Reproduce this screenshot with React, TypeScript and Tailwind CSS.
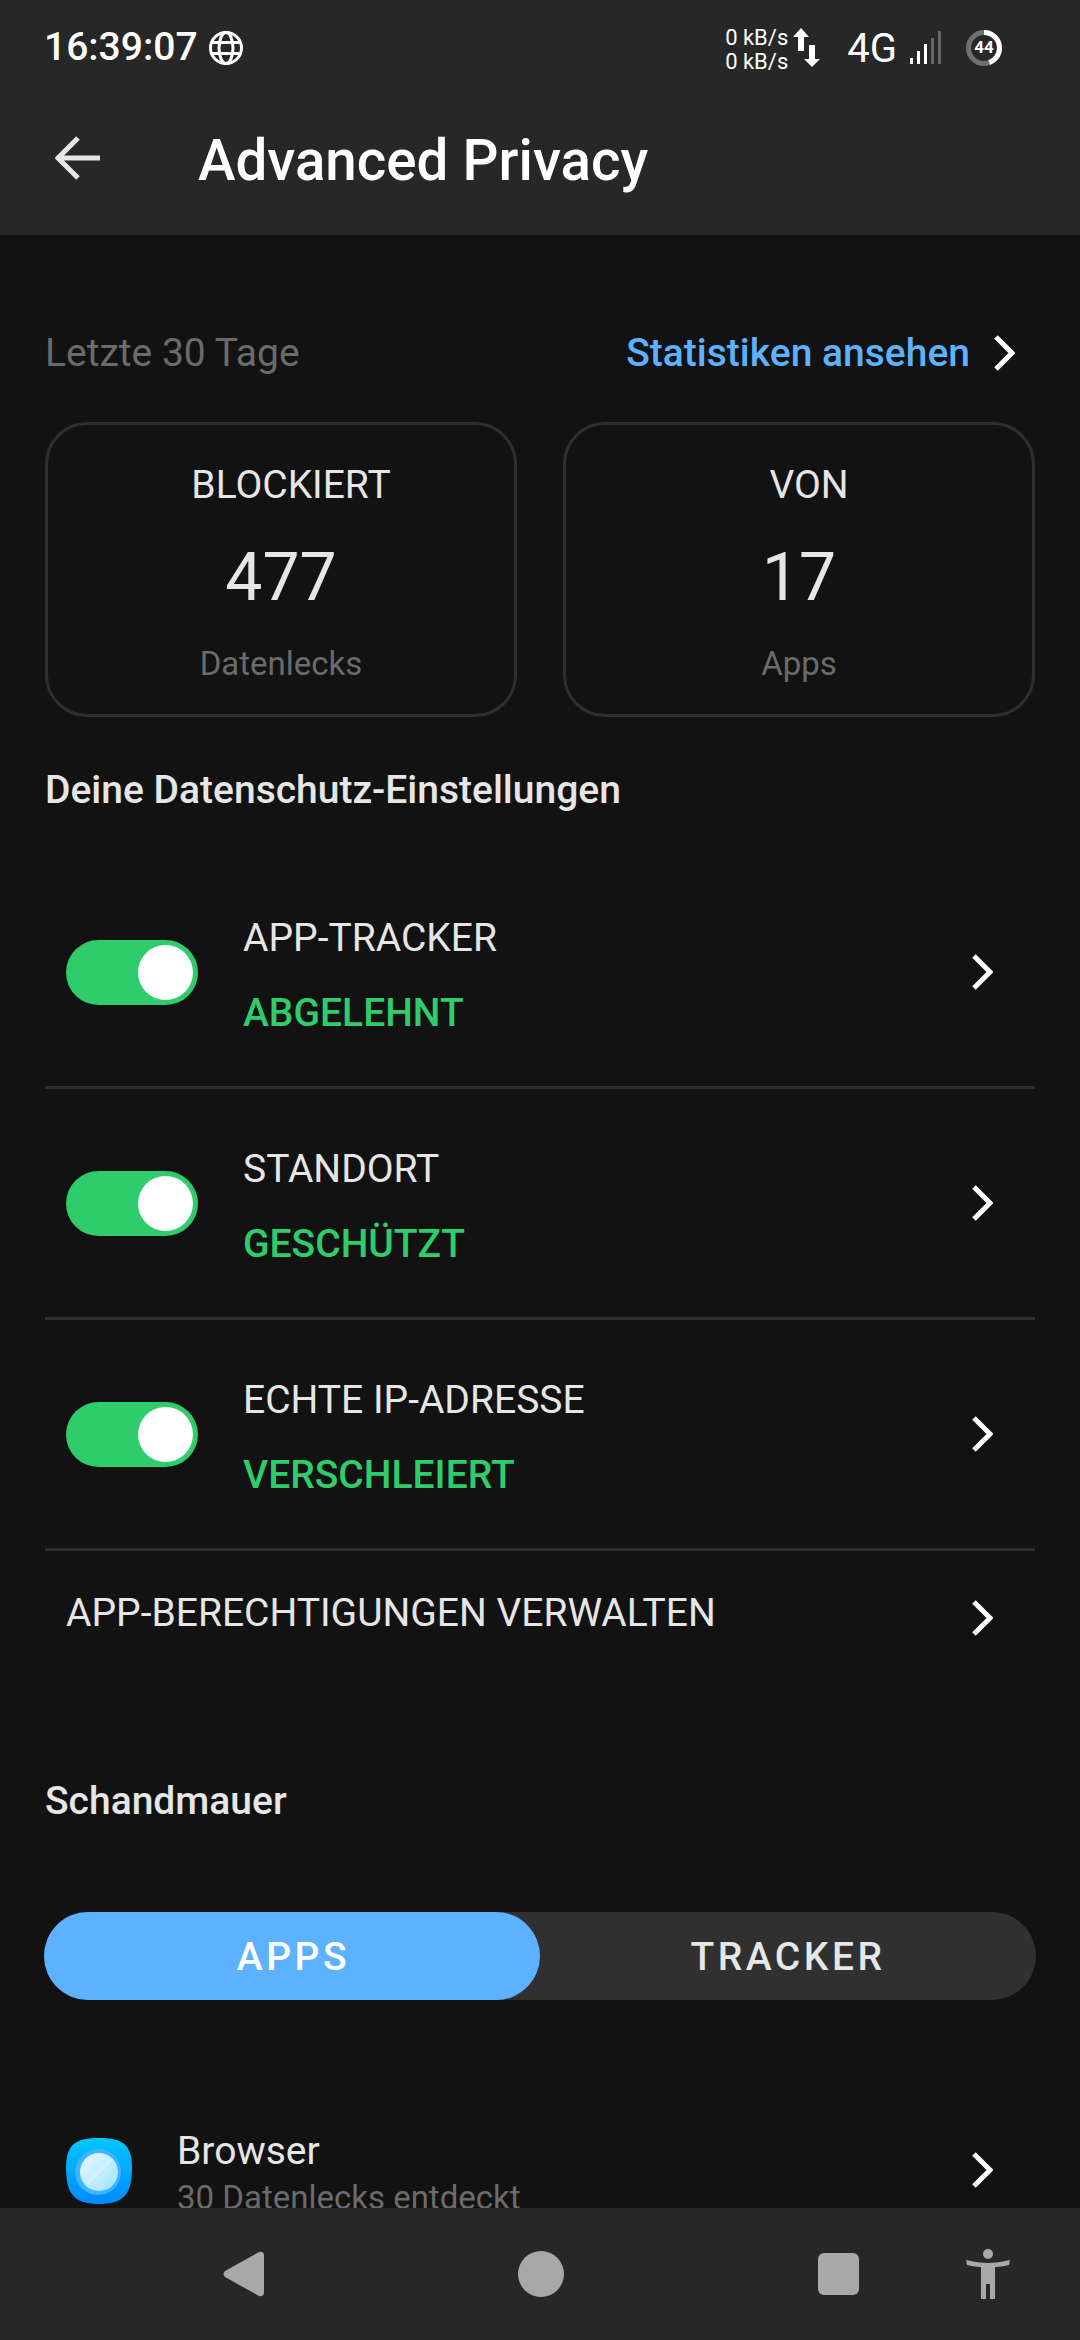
import React from "react";

const font = { fontFamily: "Roboto, sans-serif" };

function Chevron({ className = "" }: { className?: string }) {
  return (
    <svg width="21" height="36" viewBox="0 0 21 36" className={`shrink-0 ${className}`} fill="none">
      <path d="M2 2 L18 18 L2 34" stroke="#fff" strokeWidth="5" strokeLinejoin="miter" />
    </svg>
  );
}

function Toggle() {
  return (
    <div className="ml-[21px] flex h-[65px] w-[132px] shrink-0 items-center justify-end rounded-full bg-[#2ecc6a] pr-[5px]">
      <div className="h-[55px] w-[55px] rounded-full bg-white" />
    </div>
  );
}

function Row({ title, status }: { title: string; status: string }) {
  return (
    <div className="flex h-[231px] items-center border-b-[3px] border-[#2f2f2f] pr-[42px]">
      <Toggle />
      <div className="ml-[45px] flex-1 pt-[8px]">
        <div className="text-[39px] leading-[75px] text-[#e6e6e6]">{title}</div>
        <div className="text-[39px] font-medium leading-[75px] text-[#2ecc6a]">{status}</div>
      </div>
      <Chevron />
    </div>
  );
}

function Card({ label, value, sub }: { label: string; value: string; sub: string }) {
  return (
    <div className="flex h-[295px] flex-col items-center rounded-[42px] border-[3px] border-[#2f2f2f]">
      <div className="mt-[35px] pl-[20px] text-[39px] leading-[50px] text-[#e6e6e6]">{label}</div>
      <div className="mt-[23px] text-[66px] leading-[90px] text-[#e6e6e6]">{value}</div>
      <div className="mt-[18px] text-[33px] leading-[46px] text-[#6b6b6b]">{sub}</div>
    </div>
  );
}

function StatusBar() {
  return (
    <div className="flex h-[95px] items-center pl-[44px] pr-[78px] text-white">
      <span className="text-[39px] font-medium leading-none">16:39:07</span>
      <svg width="36" height="36" viewBox="0 0 36 36" fill="none" stroke="#fff" strokeWidth="3" className="ml-[10px]">
        <circle cx="18" cy="18" r="15.5" />
        <ellipse cx="18" cy="18" rx="7" ry="15.5" />
        <path d="M3.5 12.5 H32.5 M3.5 23.5 H32.5" />
      </svg>
      <div className="ml-auto flex flex-col pt-[4px] text-[22px] leading-[24px]">
        <span>0 kB/s</span>
        <span>0 kB/s</span>
      </div>
      <svg width="28" height="40" viewBox="0 0 28 40" fill="#fff" className="ml-[5px]">
        <path d="M8 0 L16 9 H11 V23 H5 V9 H0 Z" />
        <path d="M16 17 H22 V31 H27 L19 39 L11 31 H16 Z" />
      </svg>
      <span className="ml-[26px] pt-[2px] text-[40px] leading-none">4G</span>
      <svg width="32" height="33" viewBox="0 0 32 33" className="ml-[13px]">
        <rect x="0" y="27" width="3" height="6" fill="#fff" />
        <rect x="7" y="20" width="3" height="13" fill="#fff" />
        <rect x="14" y="13" width="3" height="20" fill="#fff" />
        <rect x="21" y="7" width="3" height="26" fill="#666" />
        <rect x="28" y="0" width="3" height="33" fill="#666" />
      </svg>
      <div className="relative ml-[24px] h-[36px] w-[36px]">
        <svg width="36" height="36" viewBox="0 0 36 36" fill="none" strokeWidth="5" className="-rotate-90">
          <circle cx="18" cy="18" r="15.5" stroke="#707070" />
          <circle cx="18" cy="18" r="15.5" stroke="#fff" strokeDasharray="43 98" />
        </svg>
        <span className="absolute inset-0 flex items-center justify-center text-[17px] font-bold leading-none">44</span>
      </div>
    </div>
  );
}

export default function App() {
  return (
    <div className="flex h-[2340px] w-[1080px] flex-col overflow-hidden bg-[#121212]" style={font}>
      <header className="h-[235px] shrink-0 bg-[#272727]">
        <StatusBar />
        <div className="flex h-[130px] items-center pl-[55px]">
          <svg width="46" height="44" viewBox="0 0 46 44" fill="none" stroke="#e6e6e6" strokeWidth="5" className="-mt-[5px]">
            <path d="M23 2 L3 22 L23 42 M3 22 H45" />
          </svg>
          <h1 className="ml-[97px] pt-[2px] text-[56.5px] font-medium leading-none text-white">Advanced Privacy</h1>
        </div>
      </header>

      <main className="min-h-0 flex-1 overflow-hidden px-[45px] pt-[88px]">
        <div className="flex h-[60px] items-center">
          <span className="text-[39px] text-[#6b6b6b]">Letzte 30 Tage</span>
          <span className="ml-auto text-[39px] font-medium text-[#5db2ff]">Statistiken ansehen</span>
          <Chevron className="ml-[24px] mr-[20px]" />
        </div>

        <div className="mt-[39px] grid grid-cols-2 gap-[46px]">
          <Card label="BLOCKIERT" value="477" sub="Datenlecks" />
          <Card label="VON" value="17" sub="Apps" />
        </div>

        <h2 className="mt-[51px] h-[44px] text-[39px] font-medium leading-[44px] text-[#e6e6e6]">Deine Datenschutz-Einstellungen</h2>

        <div className="mt-[46px]">
          <Row title="APP-TRACKER" status="ABGELEHNT" />
          <Row title="STANDORT" status="GESCHÜTZT" />
          <Row title="ECHTE IP-ADRESSE" status="VERSCHLEIERT" />
          <div className="flex h-[120px] items-center pl-[21px] pr-[42px]">
            <span className="flex-1 pt-[4px] text-[39px] text-[#e6e6e6]">APP-BERECHTIGUNGEN VERWALTEN</span>
            <Chevron className="mt-[14px]" />
          </div>
        </div>

        <h2 className="mt-[108px] h-[44px] text-[39px] font-medium leading-[44px] text-[#e6e6e6]">Schandmauer</h2>

        <div className="-mx-px mt-[89px] flex h-[88px] rounded-full bg-[#303030]">
          <div className="flex w-1/2 items-center justify-center rounded-full bg-[#5db2ff] pl-[3px] pt-[3px] text-[39px] font-medium tracking-[3.5px] text-white">APPS</div>
          <div className="flex w-1/2 items-center justify-center pt-[3px] text-[39px] font-medium tracking-[3.5px] text-[#e6e6e6]">TRACKER</div>
        </div>

        <div className="mt-[127px] flex items-start pl-[21px] pr-[42px]">
          <svg width="66" height="66" viewBox="0 0 66 66" className="mt-[11px] shrink-0">
            <defs>
              <linearGradient id="bg" x1="0" y1="0" x2="0" y2="1">
                <stop offset="0" stopColor="#00c8ff" />
                <stop offset="1" stopColor="#0088ff" />
              </linearGradient>
              <linearGradient id="ball" x1="0" y1="0" x2="1" y2="1">
                <stop offset="0" stopColor="#e6f8ff" />
                <stop offset="1" stopColor="#a0e4ff" />
              </linearGradient>
            </defs>
            <path d="M33 0 C56 0 66 6 66 30 C66 58 56 66 33 66 C10 66 0 58 0 30 C0 6 10 0 33 0 Z" fill="url(#bg)" />
            <circle cx="32" cy="34" r="23" fill="#3fb4ff" />
            <circle cx="33" cy="34" r="19" fill="url(#ball)" />
            <path d="M21 46 L45 22" stroke="#fff" strokeOpacity="0.35" strokeWidth="2" />
          </svg>
          <div className="ml-[45px] flex-1 pt-[2px]">
            <div className="text-[39px] leading-[44px] text-[#e6e6e6]">Browser</div>
            <div className="mt-[3px] text-[33px] leading-[44px] text-[#6b6b6b]">30 Datenlecks entdeckt</div>
          </div>
          <Chevron className="mt-[25px]" />
        </div>
      </main>

      <footer className="flex h-[132px] shrink-0 items-center bg-[#272727] pl-[222px]">
        <svg width="42" height="46" viewBox="0 0 42 46" className="shrink-0">
          <path d="M37 1 L3 20 Q0 23 3 26 L37 45 Q42 46 42 41 V5 Q42 0 37 1 Z" fill="#a8a8a8" />
        </svg>
        <div className="ml-[254px] h-[46px] w-[46px] shrink-0 rounded-full bg-[#a8a8a8]" />
        <div className="ml-[254px] h-[42px] w-[41px] shrink-0 rounded-[6px] bg-[#a8a8a8]" />
        <svg width="44" height="50" viewBox="0 0 44 50" className="ml-[107px] shrink-0" fill="#a8a8a8">
          <circle cx="22" cy="5" r="5" />
          <path d="M0 11 C8 13 16 14 22 14 C28 14 36 13 44 11 L43 16 C38 17 34 18 29 18 V50 H24 V35 H20 V50 H15 V18 C10 18 6 17 1 16 Z" />
        </svg>
      </footer>
    </div>
  );
}
